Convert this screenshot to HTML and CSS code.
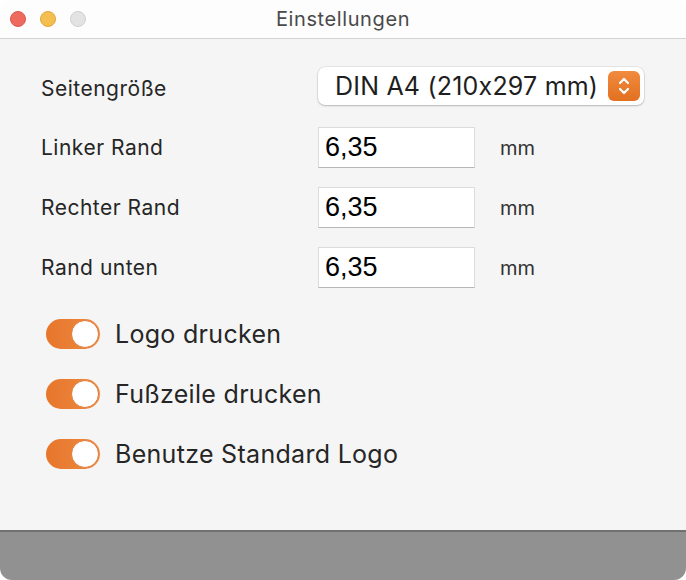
FILE: index.html
```html
<!DOCTYPE html>
<html lang="de">
<head>
  <meta charset="UTF-8">
  <title>Einstellungen</title>
  <link rel="stylesheet" href="styles.css">
</head>
<body>
  <div class="window">
    <div class="titlebar">
      <div class="lights">
        <span class="light close"></span>
        <span class="light minimize"></span>
        <span class="light zoom"></span>
      </div>
      <div class="title">Einstellungen</div>
      <div></div>
    </div>

    <div class="content">
      <div class="form">
        <label class="label first">Seitengröße</label>
        <div class="popup">
          <span class="popup-text">DIN A4 (210x297 mm)</span>
          <span class="popup-arrows">
            <svg width="14" height="22" viewBox="0 0 14 22">
              <path d="M3 8 L7 4 L11 8" fill="none" stroke="#fff" stroke-width="2.2" stroke-linecap="round" stroke-linejoin="round"/>
              <path d="M3 14 L7 18 L11 14" fill="none" stroke="#fff" stroke-width="2.2" stroke-linecap="round" stroke-linejoin="round"/>
            </svg>
          </span>
        </div>

        <label class="label">Linker Rand</label>
        <div class="field-row">
          <input class="field" type="text" value="6,35">
          <span class="unit">mm</span>
        </div>

        <label class="label">Rechter Rand</label>
        <div class="field-row">
          <input class="field" type="text" value="6,35">
          <span class="unit">mm</span>
        </div>

        <label class="label">Rand unten</label>
        <div class="field-row">
          <input class="field" type="text" value="6,35">
          <span class="unit">mm</span>
        </div>
      </div>

      <div class="switches">
        <div class="switch-row">
          <span class="switch"><span class="knob"></span></span>
          <span class="switch-label">Logo drucken</span>
        </div>
        <div class="switch-row">
          <span class="switch"><span class="knob"></span></span>
          <span class="switch-label">Fußzeile drucken</span>
        </div>
        <div class="switch-row">
          <span class="switch"><span class="knob"></span></span>
          <span class="switch-label">Benutze Standard Logo</span>
        </div>
      </div>
    </div>

    <div class="footer"></div>
  </div>
</body>
</html>
```

FILE: styles.css
```css
body {
  margin: 0;
  background: #ffffff;
  font-family: Inter, "Noto Sans", sans-serif;
  font-feature-settings: "calt" 0;
  color: #262626;
}
.window {
  width: 686px;
  height: 580px;
  display: flex;
  flex-direction: column;
  border-radius: 12px;
  overflow: hidden;
  background: #f5f5f5;
}
.titlebar {
  height: 38px;
  flex: none;
  display: grid;
  grid-template-columns: 1fr auto 1fr;
  align-items: center;
  background: #fdfdfd;
  border-bottom: 1px solid #d4d4d4;
}
.lights {
  display: flex;
  gap: 14px;
  padding-left: 10px;
}
.light {
  width: 16px;
  height: 16px;
  border-radius: 50%;
  box-sizing: border-box;
}
.close {
  background: #ee6a5f;
  border: 1px solid #d9574d;
}
.minimize {
  background: #f5bf4f;
  border: 1px solid #dea63a;
}
.zoom {
  background: #e3e3e3;
  border: 1px solid #cfcfcf;
}
.title {
  font-size: 20px;
  color: #4a4a4a;
  letter-spacing: 0.6px;
}
.content {
  flex: 1;
  padding: 24px 0 0 0;
}
.form {
  display: grid;
  grid-template-columns: 277px auto;
  grid-template-rows: 45px 41px 41px 41px;
  row-gap: 19px;
  align-items: center;
  padding-left: 41px;
}
.label {
  font-size: 21px;
  letter-spacing: 0.5px;
  color: #262626;
}
.label.first {
  padding-top: 5px;
}
.popup {
  width: 326px;
  height: 38px;
  box-sizing: border-box;
  display: flex;
  align-items: center;
  justify-content: space-between;
  padding: 0 4px 0 17px;
  background: #ffffff;
  border-radius: 7px;
  box-shadow: 0 0 0 0.5px rgba(0, 0, 0, 0.12), 0 1px 2px rgba(0, 0, 0, 0.2);
}
.popup-text {
  font-size: 25px;
  letter-spacing: 0.2px;
  color: #1e1e1e;
}
.popup-arrows {
  width: 32px;
  height: 30px;
  border-radius: 6px;
  display: flex;
  align-items: center;
  justify-content: center;
  background: linear-gradient(#f08b3f, #e2701f);
}
.field-row {
  display: flex;
  align-items: center;
}
.field {
  width: 157px;
  height: 41px;
  box-sizing: border-box;
  margin: 0;
  padding: 0 0 0 6px;
  border: 1px solid #dcdcdc;
  border-bottom-color: #b8b8b8;
  background: #ffffff;
  font-family: "Liberation Sans", Arial, sans-serif;
  font-size: 27px;
  color: #000000;
  outline: none;
}
.unit {
  margin-left: 25px;
  font-size: 20px;
  color: #333333;
}
.switches {
  display: flex;
  flex-direction: column;
  gap: 30px;
  padding: 31px 0 0 46px;
}
.switch-row {
  display: flex;
  align-items: center;
  gap: 15px;
  height: 30px;
}
.switch {
  width: 54px;
  height: 30px;
  border-radius: 15px;
  background: linear-gradient(90deg, #e6762c, #ee8a40);
  display: flex;
  justify-content: flex-end;
  align-items: center;
  padding: 1px;
  box-sizing: border-box;
}
.knob {
  width: 28px;
  height: 28px;
  border-radius: 50%;
  background: #ffffff;
  box-sizing: border-box;
  border: 1.5px solid #e17a35;
}
.switch-label {
  font-size: 25px;
  letter-spacing: 0.3px;
  color: #262626;
}
.footer {
  height: 48px;
  flex: none;
  background: #919191;
  border-top: 2px solid #717171;
}
```
